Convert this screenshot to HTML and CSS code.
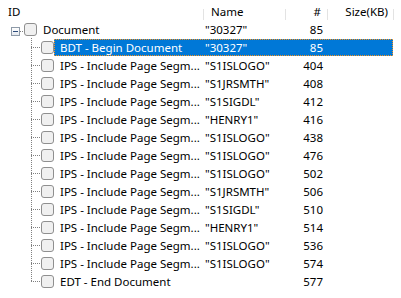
FILE: index.html
```html
<!DOCTYPE html>
<html>
<head>
<meta charset="utf-8">
<link rel="stylesheet" href="styles.css">
</head>
<body>
<div class="view">
  <div class="header">
    <div class="hcell hid">ID</div><span class="sep"></span>
    <div class="hcell hname">Name</div><span class="sep"></span>
    <div class="hcell hnum">#</div><span class="sep"></span>
    <div class="hcell hsize">Size(KB)</div><span class="sep"></span>
  </div>
  <div class="rows">
    <div class="row root">
      <span class="expander"><span class="minus"></span></span>
      <span class="hline"></span>
      <span class="check"></span>
      <div class="content">
        <span class="c-id">Document</span>
        <span class="c-name">"30327"</span>
        <span class="c-num">85</span>
        <span class="c-size"></span>
      </div>
    </div>
    <div class="row child">
      <span class="guide"></span><span class="check"></span>
      <div class="content selected">
        <span class="c-id">BDT - Begin Document</span>
        <span class="c-name">"30327"</span>
        <span class="c-num">85</span>
        <span class="c-size"></span>
      </div>
    </div>
    <div class="row child">
      <span class="guide"></span><span class="check"></span>
      <div class="content"><span class="c-id">IPS - Include Page Segm...</span><span class="c-name">"S1ISLOGO"</span><span class="c-num">404</span><span class="c-size"></span></div>
    </div>
    <div class="row child">
      <span class="guide"></span><span class="check"></span>
      <div class="content"><span class="c-id">IPS - Include Page Segm...</span><span class="c-name">"S1JRSMTH"</span><span class="c-num">408</span><span class="c-size"></span></div>
    </div>
    <div class="row child">
      <span class="guide"></span><span class="check"></span>
      <div class="content"><span class="c-id">IPS - Include Page Segm...</span><span class="c-name">"S1SIGDL"</span><span class="c-num">412</span><span class="c-size"></span></div>
    </div>
    <div class="row child">
      <span class="guide"></span><span class="check"></span>
      <div class="content"><span class="c-id">IPS - Include Page Segm...</span><span class="c-name">"HENRY1"</span><span class="c-num">416</span><span class="c-size"></span></div>
    </div>
    <div class="row child">
      <span class="guide"></span><span class="check"></span>
      <div class="content"><span class="c-id">IPS - Include Page Segm...</span><span class="c-name">"S1ISLOGO"</span><span class="c-num">438</span><span class="c-size"></span></div>
    </div>
    <div class="row child">
      <span class="guide"></span><span class="check"></span>
      <div class="content"><span class="c-id">IPS - Include Page Segm...</span><span class="c-name">"S1ISLOGO"</span><span class="c-num">476</span><span class="c-size"></span></div>
    </div>
    <div class="row child">
      <span class="guide"></span><span class="check"></span>
      <div class="content"><span class="c-id">IPS - Include Page Segm...</span><span class="c-name">"S1ISLOGO"</span><span class="c-num">502</span><span class="c-size"></span></div>
    </div>
    <div class="row child">
      <span class="guide"></span><span class="check"></span>
      <div class="content"><span class="c-id">IPS - Include Page Segm...</span><span class="c-name">"S1JRSMTH"</span><span class="c-num">506</span><span class="c-size"></span></div>
    </div>
    <div class="row child">
      <span class="guide"></span><span class="check"></span>
      <div class="content"><span class="c-id">IPS - Include Page Segm...</span><span class="c-name">"S1SIGDL"</span><span class="c-num">510</span><span class="c-size"></span></div>
    </div>
    <div class="row child">
      <span class="guide"></span><span class="check"></span>
      <div class="content"><span class="c-id">IPS - Include Page Segm...</span><span class="c-name">"HENRY1"</span><span class="c-num">514</span><span class="c-size"></span></div>
    </div>
    <div class="row child">
      <span class="guide"></span><span class="check"></span>
      <div class="content"><span class="c-id">IPS - Include Page Segm...</span><span class="c-name">"S1ISLOGO"</span><span class="c-num">536</span><span class="c-size"></span></div>
    </div>
    <div class="row child">
      <span class="guide"></span><span class="check"></span>
      <div class="content"><span class="c-id">IPS - Include Page Segm...</span><span class="c-name">"S1ISLOGO"</span><span class="c-num">574</span><span class="c-size"></span></div>
    </div>
    <div class="row child last">
      <span class="guide"></span><span class="check"></span>
      <div class="content"><span class="c-id">EDT - End Document</span><span class="c-name"></span><span class="c-num">577</span><span class="c-size"></span></div>
    </div>
  </div>
</div>
</body>
</html>
```

FILE: styles.css
```css
html, body {
  margin: 0;
  padding: 0;
  background: #ffffff;
}

.view {
  width: 401px;
  height: 298px;
  overflow: hidden;
  font-family: "Noto Sans", "Open Sans", sans-serif;
  font-size: 11.5px;
  color: #000000;
  background: #ffffff;
}

.header {
  display: flex;
  align-items: flex-start;
  height: 20px;
  line-height: 18px;
  padding-top: 3px;
  box-sizing: border-box;
}

.hcell {
  box-sizing: border-box;
  height: 17px;
  white-space: nowrap;
}

.sep {
  width: 1px;
  height: 11px;
  margin-top: 6px;
  background: #e3e3e3;
  flex: none;
}

.hid {
  width: 203px;
  padding-left: 8px;
}

.hname {
  width: 81px;
  padding-left: 7px;
}

.hnum {
  width: 41px;
  text-align: right;
  padding-right: 6px;
}

.hsize {
  width: 65px;
  text-align: right;
  padding-right: 5px;
}

.rows {
  display: flex;
  flex-direction: column;
}

.row {
  display: flex;
  align-items: stretch;
  height: 18px;
  line-height: 18px;
}

.root {
  padding-left: 11px;
}

.expander {
  width: 9px;
  height: 9px;
  box-sizing: border-box;
  margin-top: 7px;
  border: 1px solid #8e9aa8;
  background: linear-gradient(#ffffff, #e4e8ee);
  display: flex;
  align-items: center;
  justify-content: center;
}

.minus {
  width: 5px;
  height: 1px;
  background: #2b4a7a;
}

.hline {
  width: 4px;
  margin-top: 11px;
  height: 1px;
  background: repeating-linear-gradient(to right, #808080 0 1px, transparent 1px 2px);
}

.check {
  width: 13px;
  height: 13px;
  box-sizing: border-box;
  margin-top: 3px;
  border: 1px solid #8f8f8f;
  border-radius: 3px;
  background: #f0f0f0;
  flex: none;
}

.child {
  padding-left: 31px;
}

.guide {
  width: 10px;
  flex: none;
  background:
    repeating-linear-gradient(to bottom, #808080 0 1px, transparent 1px 2px) left top / 1px 100% no-repeat,
    repeating-linear-gradient(to right, #808080 0 1px, transparent 1px 2px) left 9px / 10px 1px no-repeat;
}

.last .guide {
  background:
    repeating-linear-gradient(to bottom, #808080 0 1px, transparent 1px 2px) left top / 1px 10px no-repeat,
    repeating-linear-gradient(to right, #808080 0 1px, transparent 1px 2px) left 9px / 10px 1px no-repeat;
}

.content {
  display: flex;
  height: 17px;
  line-height: 17px;
  margin-top: 1px;
  white-space: nowrap;
}

.root .content .c-id {
  width: 166px;
}

.c-id {
  width: 149px;
  padding-left: 6px;
  box-sizing: border-box;
  overflow: hidden;
}

.c-name {
  width: 82px;
  padding-left: 2px;
  box-sizing: border-box;
}

.c-num {
  width: 42px;
  text-align: right;
  padding-right: 4px;
  box-sizing: border-box;
}

.c-size {
  width: 66px;
}

.selected {
  background: #0078d7;
  color: #ffffff;
  outline: 1px dotted #f7931e;
  outline-offset: -1px;
}
```
